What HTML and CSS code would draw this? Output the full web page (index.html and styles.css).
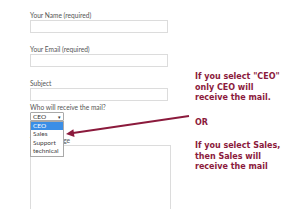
FILE: index.html
```html
<!DOCTYPE html>
<html lang="en">
<head>
    <meta charset="UTF-8">
    <title>Contact form - recipient select</title>
    <link rel="stylesheet" href="styles.css">
</head>
<body>
    <div class="page">
        <form class="contact-form">
            <div class="field">
                <label>Your Name (required)</label>
                <div class="input"></div>
            </div>
            <div class="field">
                <label>Your Email (required)</label>
                <div class="input"></div>
            </div>
            <div class="field field-tight">
                <label>Subject</label>
                <div class="input"></div>
            </div>
            <div class="field field-select">
                <label>Who will receive the mail?</label>
                <div class="select">
                    <span>CEO</span>
                    <span class="caret">▾</span>
                </div>
                <ul class="options">
                    <li class="selected">CEO</li>
                    <li>Sales</li>
                    <li>Support</li>
                    <li>technical</li>
                </ul>
            </div>
            <div class="field field-last">
                <label>Your Message</label>
                <div class="textarea"></div>
            </div>
        </form>

        <svg class="arrow" width="300" height="210" viewBox="0 0 300 210">
            <line x1="189" y1="116" x2="73" y2="133" stroke="#8b1a3c" stroke-width="1.8"/>
            <polygon points="66,134 74.5,137 73.4,129.3" fill="#8b1a3c"/>
        </svg>

        <div class="note">
            <p>If you select "CEO"<br>only CEO will<br>receive the mail.</p>
            <p class="or">OR</p>
            <p>If you select Sales,<br>then Sales will<br>receive the mail</p>
        </div>
    </div>
</body>
</html>
```

FILE: styles.css
```css
* {
    margin: 0;
    padding: 0;
    box-sizing: border-box;
}

body {
    background: white;
    font-family: Lato, 'Open Sans', sans-serif;
    width: 300px;
    height: 210px;
    overflow: hidden;
}

.page {
    position: relative;
    height: 210px;
    overflow: hidden;
}

.contact-form {
    padding: 10px 0 0 30px;
    width: 171px;
}

.field {
    position: relative;
    margin-bottom: 11px;
}

.field-tight {
    margin-bottom: 1px;
}

.field-select {
    margin-bottom: 14px;
}

.field-last {
    margin-bottom: 0;
}

.field label {
    display: block;
    font-size: 6.6px;
    line-height: 10px;
    color: #555;
}

.input {
    width: 138px;
    height: 13px;
    border: 1px solid #dcdcdc;
}

.select {
    width: 34px;
    height: 9px;
    border: 1px solid #a9a9a9;
    border-radius: 1px;
    display: flex;
    justify-content: space-between;
    align-items: center;
    padding: 0 2px;
    font-size: 6.5px;
    color: #333;
}

.caret {
    font-size: 5px;
}

.options {
    position: absolute;
    left: 0;
    top: 19px;
    width: 34px;
    list-style: none;
    background: white;
    border: 1px solid #a9a9a9;
    z-index: 2;
}

.options li {
    height: 8.4px;
    line-height: 8.4px;
    padding-left: 2px;
    font-size: 6.5px;
    color: #444;
}

.options li.selected {
    background: #3a8ee6;
    color: white;
}

.textarea {
    width: 141px;
    height: 64px;
    border: 1px solid #dcdcdc;
    border-bottom: none;
}

.arrow {
    position: absolute;
    left: 0;
    top: 0;
    z-index: 3;
}

.note {
    position: absolute;
    left: 195px;
    top: 72px;
    color: #8b1a3c;
    font-family: 'DejaVu Sans', Verdana, sans-serif;
    font-weight: bold;
    font-size: 8px;
    line-height: 10.5px;
}

.note .or {
    margin: 14.5px 0 12.5px;
}
```
